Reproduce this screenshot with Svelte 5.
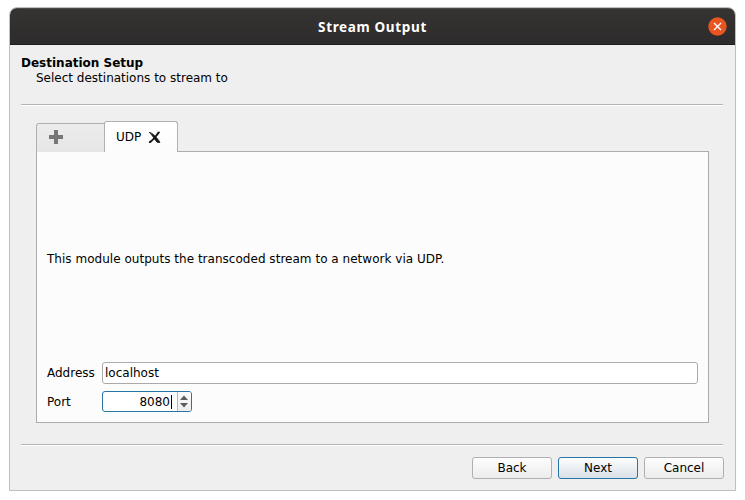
<script>
  let address = $state('localhost');
  let port = $state('8080');
  const actions = [
    { label: 'Back', primary: false },
    { label: 'Next', primary: true },
    { label: 'Cancel', primary: false }
  ];
</script>

<main class="desktop">
  <section class="window">
    <header class="titlebar">
      <span class="title">Stream Output</span>
      <button class="close" aria-label="Close">
        <svg width="19" height="19" viewBox="0 0 19 19">
          <circle cx="9.5" cy="9.5" r="9.2" fill="#e95420" />
          <path d="M6.5 6.5l6 6M12.5 6.5l-6 6" stroke="#fff" stroke-width="1.4" stroke-linecap="square" />
        </svg>
      </button>
    </header>

    <div class="body">
      <div class="heading">
        <h1>Destination Setup</h1>
        <p>Select destinations to stream to</p>
      </div>
      <div class="rule"></div>

      <div class="tabs">
        <button class="tab add" aria-label="Add">
          <svg width="14" height="14" viewBox="0 0 14 14">
            <path d="M5 0h4v5h5v4h-5v5h-4v-5h-5v-4h5z" fill="#777" />
          </svg>
        </button>
        <div class="tab active">
          <span>UDP</span>
          <svg width="13" height="13" viewBox="0 0 13 13">
            <path d="M1.2 1.4C4 1.3 9.4 6.8 12 11.4L9.4 11.5C7 9.5 4.5 3.8 1.2 1.4Z" fill="#151915" stroke="#151915" stroke-width=".8" />
            <path d="M11.3 .6L12 1.4C9.8 4.8 6 8.4 2.6 12L.8 11.9L1 10.6C4.9 8.1 7.7 3.8 9.9 .7Z" fill="#151915" />
          </svg>
        </div>
      </div>

      <div class="panel">
        <p class="description">This module outputs the transcoded stream to a network via UDP.</p>
        <div class="row">
          <label for="address">Address</label>
          <input id="address" class="address" bind:value={address} />
        </div>
        <div class="row port-row">
          <label for="port">Port</label>
          <div class="spin">
            <input id="port" bind:value={port} />
            <span class="caret"></span>
            <span class="arrows">
              <svg width="13" height="19" viewBox="0 0 13 19">
                <path d="M2 8L6 3.6L10 8ZM2 11L6 15.4L10 11Z" fill="#5e5e5e" />
              </svg>
            </span>
          </div>
        </div>
      </div>

      <div class="rule bottom"></div>
      <footer>
        {#each actions as action}
          <button class="action" class:primary={action.primary}>{action.label}</button>
        {/each}
      </footer>
    </div>
  </section>
</main>

<style>
  :global(body) { background: #fff; overflow: hidden; }
  * { box-sizing: border-box; margin: 0; }
  .desktop {
    width: 745px;
    height: 500px;
    padding: 7px 9px 9px;
    font: 12px/15px "DejaVu Sans", sans-serif;
    color: #000;
  }
  button, input { font: inherit; color: inherit; padding: 0; border: 0; background: none; outline: 0; }
  svg { display: block; }
  .window {
    width: 727px;
    height: 484px;
    border: 1px solid #bfbfbf;
    border-radius: 8px 8px 0 0;
    background: #efefef;
    overflow: hidden;
  }
  .titlebar {
    height: 37px;
    display: grid;
    grid-template-columns: 1fr auto 1fr;
    align-items: center;
    background: linear-gradient(#353432, #2d2b2b);
    border-top: 1px solid #4b4a48;
    border-bottom: 1px solid #1e1d1d;
  }
  .title {
    grid-column: 2;
    color: #fff;
    font: bold 13.5px/20px "Noto Sans", sans-serif;
    letter-spacing: .65px;
  }
  .close { justify-self: end; margin-right: 8.5px; width: 19px; height: 19px; }
  .close svg { margin-top: -1px; }
  .body { padding: 11px 12px 0 11px; }
  h1 { font-size: 12px; line-height: 15px; font-weight: bold; }
  .heading p { padding-left: 15px; }
  .rule { height: 2px; margin-top: 18px; border-top: 1px solid #b4b4b4; border-bottom: 1px solid #fff; }
  .tabs { display: flex; align-items: flex-end; height: 31px; margin: 15px 14px 0 15px; }
  .tab { display: flex; align-items: center; border: 1px solid #b0b0b0; border-bottom: 0; }
  .add {
    width: 69px;
    height: 29px;
    margin-right: -1px;
    padding: 0 0 2px 12px;
    border-radius: 3px 0 0 0;
    background: linear-gradient(#ececec, #e6e6e6);
  }
  .active {
    width: 74px;
    height: 31px;
    padding: 0 0 0 11px;
    gap: 6px;
    border-radius: 3px 3px 0 0;
    background: linear-gradient(#fff, #fcfcfc);
    position: relative;
  }
  .active svg { margin-left: 1px; }
  .panel {
    height: 272px;
    margin: -1px 14px 0 15px;
    border: 1px solid #acacac;
    background: #fcfcfc;
    padding: 0 10px;
  }
  .description { height: 209px; padding-top: 100px; letter-spacing: .025px; }
  .row { display: flex; align-items: center; height: 23px; }
  .port-row { margin-top: 6px; }
  label { width: 55px; flex: none; padding-top: 2px; }
  .address {
    flex: 1;
    height: 22px;
    padding: 1px 0 0 2px;
    border: 1px solid #aaa;
    border-radius: 3px;
    background: #fff;
  }
  .spin {
    width: 90px;
    height: 21px;
    display: flex;
    align-items: center;
    border: 1px solid #2775a2;
    border-radius: 3px;
    background: #fff;
    overflow: hidden;
  }
  .spin input { width: 68px; height: 19px; padding-right: 1px; text-align: right; }
  .caret { flex: none; width: 1px; height: 14px; background: #000; margin-right: 5px; }
  .arrows { flex: none; width: 14px; height: 19px; border-left: 1px solid #b8b8b8; background: linear-gradient(#fcfcfc, #eee); }
  .rule.bottom { margin-top: 21px; }
  footer { display: flex; justify-content: flex-end; gap: 6px; margin: 11px -1px 0 0; }
  .action {
    width: 80px;
    height: 22px;
    padding-top: 1px;
    border: 1px solid #b0b0b0;
    border-radius: 3px;
    background: linear-gradient(#fefefe, #ececec);
  }
  .primary { border-color: #2775a2; background: linear-gradient(#fcfdfd, #dae0e8); }
</style>
